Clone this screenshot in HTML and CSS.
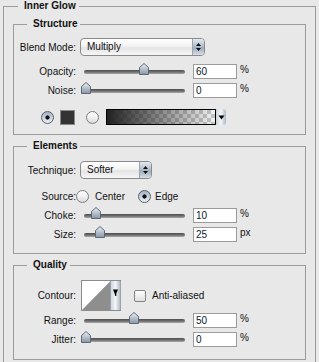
FILE: index.html
```html
<!DOCTYPE html>
<html>
<head>
    <title>Inner Glow</title>
    <link rel="stylesheet" href="styles.css">
</head>
<body>
    <!-- shared gradients for the little aqua controls -->
    <svg class="defs" width="0" height="0">
        <defs>
            <linearGradient id="thumbFill" x1="0" y1="0" x2="0" y2="1">
                <stop offset="0" stop-color="#eef2f6"/>
                <stop offset="0.5" stop-color="#b7c2cf"/>
                <stop offset="1" stop-color="#8797a8"/>
            </linearGradient>
            <linearGradient id="buttonFill" x1="0" y1="0" x2="1" y2="0">
                <stop offset="0" stop-color="#c9d2dc"/>
                <stop offset="0.5" stop-color="#f4f6f8"/>
                <stop offset="1" stop-color="#aab6c3"/>
            </linearGradient>
        </defs>
    </svg>

    <fieldset class="panel">
        <legend>Inner Glow</legend>

        <fieldset class="group">
            <legend>Structure</legend>

            <div class="row row-popup">
                <span class="label">Blend Mode:</span>
                <div class="popup popup-wide">
                    <span class="popup-text">Multiply</span>
                    <span class="stepper">
                        <svg width="7" height="10" viewBox="0 0 7 10"><path d="M3.5 1 L6 4 H1 Z M1 6 H6 L3.5 9 Z" fill="#111"/></svg>
                    </span>
                </div>
            </div>

            <div class="row row-slider first-slider">
                <span class="label">Opacity:</span>
                <div class="slider">
                    <span class="track"></span>
                    <svg class="thumb" style="left: 59px" width="10" height="12" viewBox="0 0 10 12"><path d="M5 0.5 L9.5 4.5 V11.5 H0.5 V4.5 Z" fill="url(#thumbFill)" stroke="#5f6873"/></svg>
                </div>
                <input class="field" type="text" value="60">
                <span class="unit">%</span>
            </div>

            <div class="row row-slider">
                <span class="label">Noise:</span>
                <div class="slider">
                    <span class="track"></span>
                    <svg class="thumb" style="left: 1px" width="10" height="12" viewBox="0 0 10 12"><path d="M5 0.5 L9.5 4.5 V11.5 H0.5 V4.5 Z" fill="url(#thumbFill)" stroke="#5f6873"/></svg>
                </div>
                <input class="field" type="text" value="0">
                <span class="unit">%</span>
            </div>

            <div class="row row-color">
                <span class="radio checked"></span>
                <span class="swatch"></span>
                <span class="radio radio-gap"></span>
                <div class="gradient-pick">
                    <span class="gradient"></span>
                    <span class="pick-btn">
                        <svg width="7" height="5" viewBox="0 0 7 5"><path d="M0.5 0.5 H6.5 L3.5 4.5 Z" fill="#000"/></svg>
                    </span>
                </div>
            </div>
        </fieldset>

        <fieldset class="group">
            <legend>Elements</legend>

            <div class="row row-popup">
                <span class="label">Technique:</span>
                <div class="popup popup-narrow">
                    <span class="popup-text">Softer</span>
                    <span class="stepper">
                        <svg width="7" height="10" viewBox="0 0 7 10"><path d="M3.5 1 L6 4 H1 Z M1 6 H6 L3.5 9 Z" fill="#111"/></svg>
                    </span>
                </div>
            </div>

            <div class="row row-source">
                <span class="label">Source:</span>
                <span class="radio"></span>
                <span class="option">Center</span>
                <span class="radio checked edge-radio"></span>
                <span class="option option-edge">Edge</span>
            </div>

            <div class="row row-slider">
                <span class="label">Choke:</span>
                <div class="slider">
                    <span class="track"></span>
                    <svg class="thumb" style="left: 11px" width="10" height="12" viewBox="0 0 10 12"><path d="M5 0.5 L9.5 4.5 V11.5 H0.5 V4.5 Z" fill="url(#thumbFill)" stroke="#5f6873"/></svg>
                </div>
                <input class="field" type="text" value="10">
                <span class="unit">%</span>
            </div>

            <div class="row row-slider">
                <span class="label">Size:</span>
                <div class="slider">
                    <span class="track"></span>
                    <svg class="thumb" style="left: 15px" width="10" height="12" viewBox="0 0 10 12"><path d="M5 0.5 L9.5 4.5 V11.5 H0.5 V4.5 Z" fill="url(#thumbFill)" stroke="#5f6873"/></svg>
                </div>
                <input class="field" type="text" value="25">
                <span class="unit">px</span>
            </div>
        </fieldset>

        <fieldset class="group group-last">
            <legend>Quality</legend>

            <div class="row row-contour">
                <span class="label">Contour:</span>
                <svg class="contour" width="40" height="31" viewBox="0 0 40 31">
                    <rect x="0.5" y="0.5" width="39" height="30" fill="#fff" stroke="#8c8c8c"/>
                    <path d="M1 30 L29.5 1 V30 Z" fill="#8e8e8e"/>
                    <rect x="29.5" y="1" width="10" height="29" fill="url(#buttonFill)"/>
                    <path d="M29.5 1 V30" stroke="#9aa4ae"/>
                    <path d="M32 9.5 H37 L35.3 13.5 V16 H34.2 L33.6 13.5 Z" fill="#000"/>
                </svg>
                <span class="checkbox"></span>
                <span class="option">Anti-aliased</span>
            </div>

            <div class="row row-slider">
                <span class="label">Range:</span>
                <div class="slider">
                    <span class="track"></span>
                    <svg class="thumb" style="left: 49px" width="10" height="12" viewBox="0 0 10 12"><path d="M5 0.5 L9.5 4.5 V11.5 H0.5 V4.5 Z" fill="url(#thumbFill)" stroke="#5f6873"/></svg>
                </div>
                <input class="field" type="text" value="50">
                <span class="unit">%</span>
            </div>

            <div class="row row-slider">
                <span class="label">Jitter:</span>
                <div class="slider">
                    <span class="track"></span>
                    <svg class="thumb" style="left: 1px" width="10" height="12" viewBox="0 0 10 12"><path d="M5 0.5 L9.5 4.5 V11.5 H0.5 V4.5 Z" fill="url(#thumbFill)" stroke="#5f6873"/></svg>
                </div>
                <input class="field" type="text" value="0">
                <span class="unit">%</span>
            </div>
        </fieldset>
    </fieldset>
</body>
</html>
```

FILE: styles.css
```css
body {
    margin: 0;
    background: #e8e8e8;
    font-family: "Liberation Sans", Arial, sans-serif;
    font-size: 10px;
    color: #111;
    overflow: hidden;
}

.defs {
    display: block;
    width: 0;
    height: 0;
    overflow: hidden;
}

fieldset {
    min-width: 0;
    margin: 0;
    border: 1px solid #9b9b9b;
}

legend {
    font-weight: bold;
    line-height: 12px;
    padding: 0 3px 0 6px;
}

.panel {
    margin: 0 3px;
    padding: 6px 9px 20px;
    border-bottom: none;
}

.panel > legend {
    margin-left: 5px;
}

.group {
    padding: 0 0 9px;
}

.group + .group {
    margin-top: 5px;
}

.group > legend {
    margin-left: 13px;
}

.group-last {
    padding-bottom: 10px;
}

/* rows */

.row {
    display: flex;
    align-items: center;
}

.label {
    flex: none;
    width: 62px;
    text-align: right;
}

.row-popup {
    height: 18px;
    margin-top: 8px;
}

.group + .group .row-popup {
    margin-top: 9px;
}

.row-slider {
    height: 19px;
}

.first-slider {
    margin-top: 6px;
}

.row-source {
    height: 18px;
    margin-top: 8px;
}

.row-source + .row-slider {
    margin-top: 1px;
}

.row-color {
    height: 16px;
    margin-top: 9px;
    padding-left: 27px;
}

.row-contour {
    height: 31px;
    margin-top: 9px;
}

/* popup menus */

.popup {
    display: flex;
    box-sizing: border-box;
    height: 18px;
    margin-left: 4px;
    border: 1px solid #8a8a8a;
    border-radius: 4px;
    overflow: hidden;
    background: linear-gradient(#ffffff, #f3f3f3 45%, #e4e4e4 55%, #f6f6f6);
}

.popup-wide {
    width: 125px;
}

.popup-narrow {
    width: 72px;
}

.popup-text {
    flex: 1;
    padding-left: 6px;
    line-height: 16px;
}

.stepper {
    display: flex;
    align-items: center;
    justify-content: center;
    width: 11px;
    border-left: 1px solid #9aa4ae;
    background: linear-gradient(#e3e9ef, #b3bfcc 45%, #9eacbc 55%, #d5dee8);
}

/* sliders */

.slider {
    position: relative;
    flex: none;
    width: 109px;
    height: 12px;
    margin: 0 0 5px 4px;
}

.track {
    display: block;
    height: 4px;
    margin: 7px 4px 0;
    border-radius: 2px;
    background: linear-gradient(#4d4d4d, #6e6e6e 50%, #a9a9a9);
}

.thumb {
    position: absolute;
    top: 0;
}

.field {
    box-sizing: border-box;
    width: 44px;
    height: 15px;
    margin: 0 0 0 4px;
    padding: 0 2px;
    border: 1px solid #9c9c9c;
    font-family: inherit;
    font-size: 10px;
    color: #0b1a2c;
    background: #fff;
    outline: none;
}

.unit {
    margin: 0 0 4px 3px;
}

/* color row */

.radio {
    flex: none;
    box-sizing: border-box;
    width: 13px;
    height: 13px;
    border: 1px solid #7d7d7d;
    border-radius: 50%;
    background: linear-gradient(#ffffff, #f0f0f0 50%, #dadada);
}

.radio.checked {
    border-color: #56606b;
    background: radial-gradient(circle, #111 0 1.8px, transparent 2.4px),
        linear-gradient(#a3b1c1, #c7d1dc 50%, #eef2f6);
}

.swatch {
    flex: none;
    box-sizing: border-box;
    width: 15px;
    height: 15px;
    margin-left: 6px;
    border: 1px solid #8a8a8a;
    background: #333;
}

.radio-gap {
    margin-left: 11px;
}

.gradient-pick {
    display: flex;
    height: 16px;
    margin-left: 7px;
}

.gradient {
    box-sizing: border-box;
    width: 110px;
    border: 1px solid #000;
    background: linear-gradient(to right, rgba(34, 34, 34, 1), rgba(34, 34, 34, 0)),
        conic-gradient(#c4c4c4 25%, #f2f2f2 0 50%, #c4c4c4 0 75%, #f2f2f2 0) 0 0 / 8px 8px;
}

.pick-btn {
    display: flex;
    align-items: center;
    justify-content: center;
    width: 10px;
    border-radius: 0 3px 3px 0;
    background: linear-gradient(to right, #c9d2dc, #f4f6f8 50%, #aab6c3);
}

/* source options */

.option {
    margin-left: 6px;
}

.edge-radio {
    margin-left: 13px;
}

.option-edge {
    margin-left: 4px;
}

/* contour */

.contour {
    flex: none;
    margin-left: 5px;
}

.checkbox {
    flex: none;
    box-sizing: border-box;
    width: 12px;
    height: 12px;
    margin-left: 13px;
    border: 1px solid #858585;
    border-radius: 2px;
    background: linear-gradient(#ffffff, #efefef 50%, #e0e0e0);
}
```
